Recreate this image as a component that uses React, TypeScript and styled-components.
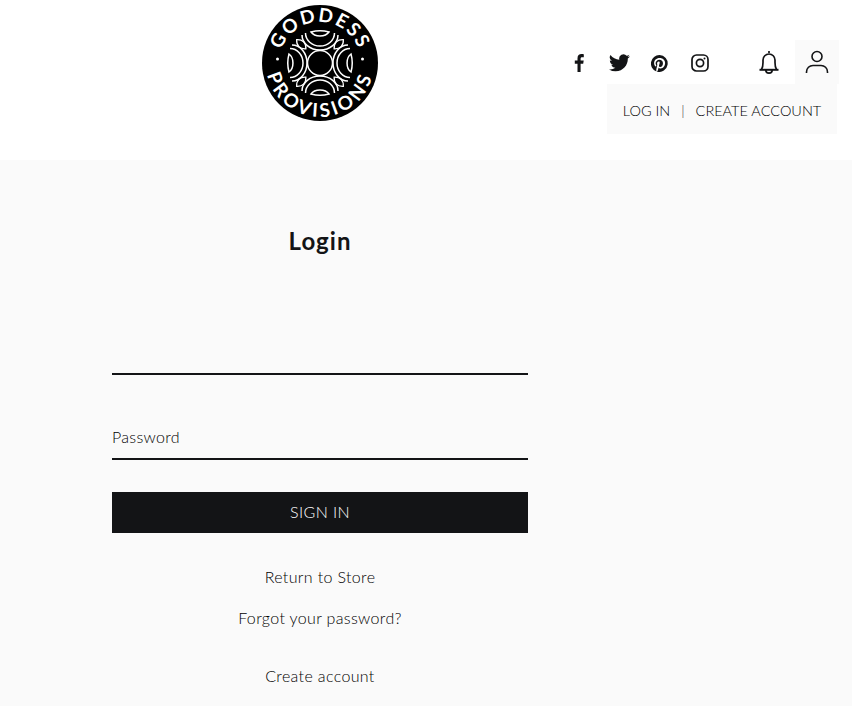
import React from 'react';
import styled, {createGlobalStyle} from 'styled-components';

const FONT = `"Lato", "Open Sans", "Liberation Sans", sans-serif`;
const INK = '#131416';

function Crescents() {
    return (
        <g fill="none" stroke="#fff">
            <path d="M-18 -28 A18 15 0 0 0 18 -28" strokeWidth="1.500"/>
            <path d="M-14.500 -30 A14.500 13 0 0 0 14.500 -30" strokeWidth="1.500"/>
            <path d="M-9 -31 Q0 -33.500 9 -31 A10 7 0 0 1 -9 -31 Z" strokeWidth="1.500"/>
        </g>
    );
}

function Leaf() {
    return <path d="M0 -20 C4.500 -24 4.500 -29 0 -33 C-4.500 -29 -4.500 -24 0 -20 Z" fill="none" stroke="#fff" strokeWidth="1.300"/>;
}

function Logo() {
    return (
        <svg width="116" height="116" viewBox="-58 -58 116 116">
            <defs>
                <path id="arc-top" d="M-41 0 A41 41 0 0 1 41 0"/>
                <path id="arc-bottom" d="M-54 0 A54 54 0 0 0 54 0"/>
            </defs>
            <circle r="58" fill="#000"/>
            <TopText>
                <textPath href="#arc-top" startOffset="50%" textAnchor="middle">GODDESS</textPath>
            </TopText>
            <BottomText>
                <textPath href="#arc-bottom" startOffset="50%" textAnchor="middle">PROVISIONS</textPath>
            </BottomText>
            <circle cx="-42.500" cy="-4" r="1.500" fill="#fff"/>
            <circle cx="42.500" cy="-4" r="1.500" fill="#fff"/>
            <circle r="12.500" fill="#000" stroke="#fff" strokeWidth="1.500"/>
            {[0, 90, 180, 270].map(angle => (
                <g key={angle} transform={`rotate(${angle})`}><Crescents/></g>
            ))}
            {[45, 135, 225, 315].map(angle => (
                <g key={angle} transform={`rotate(${angle})`}><Leaf/></g>
            ))}
        </svg>
    );
}

function FacebookIcon() {
    return (
        <svg width="10" height="18" viewBox="0 0 10 18" fill={INK}>
            <path d="M6.600 18V9.800h2.600l.5-3.200H6.600V4.700c0-.9.3-1.500 1.600-1.500h1.600V.3C9.500.2 8.600.1 7.500.1 5.100.1 3.500 1.500 3.500 4.200v2.400H.8v3.200h2.700V18z"/>
        </svg>
    );
}

function TwitterIcon() {
    return (
        <svg width="21" height="18" viewBox="0 0 24 20" fill={INK}>
            <path d="M24 2.400a9.800 9.800 0 0 1-2.800.8A4.900 4.900 0 0 0 23.300.5a9.800 9.800 0 0 1-3.100 1.200 4.900 4.900 0 0 0-8.400 4.500A14 14 0 0 1 1.700.9a4.900 4.900 0 0 0 1.500 6.600 4.900 4.900 0 0 1-2.200-.6v.1a4.900 4.900 0 0 0 3.900 4.800 4.900 4.900 0 0 1-2.200.1 4.900 4.900 0 0 0 4.600 3.400A9.900 9.900 0 0 1 0 17.300 14 14 0 0 0 7.500 19.500c9.100 0 14-7.500 14-14v-.6A10 10 0 0 0 24 2.400z"/>
        </svg>
    );
}

function PinterestIcon() {
    return (
        <svg width="17" height="17" viewBox="0 0 24 24" fill={INK}>
            <path d="M12 0a12 12 0 0 0-4.400 23.200c-.1-.9-.2-2.400 0-3.400l1.400-6s-.4-.7-.4-1.800c0-1.700 1-2.900 2.200-2.900 1 0 1.500.8 1.500 1.700 0 1-.7 2.600-1 4-.3 1.200.6 2.200 1.800 2.200 2.100 0 3.800-2.200 3.800-5.500 0-2.900-2.100-4.900-5-4.900-3.400 0-5.400 2.600-5.400 5.200 0 1 .4 2.100.9 2.700.1.100.1.200.1.300l-.3 1.400c-.1.200-.2.300-.4.200-1.500-.7-2.400-2.900-2.400-4.700 0-3.800 2.800-7.300 8-7.300 4.200 0 7.500 3 7.500 7 0 4.200-2.600 7.500-6.300 7.500-1.200 0-2.400-.6-2.800-1.400l-.8 2.900c-.3 1.100-1 2.400-1.500 3.200A12 12 0 1 0 12 0z"/>
        </svg>
    );
}

function InstagramIcon() {
    return (
        <svg width="18" height="18" viewBox="0 0 18 18" fill="none" stroke={INK}>
            <rect x="1" y="1" width="16" height="16" rx="4.500" strokeWidth="1.700"/>
            <circle cx="9" cy="9" r="3.600" strokeWidth="1.700"/>
            <circle cx="13.500" cy="4.500" r="1" fill={INK} stroke="none"/>
        </svg>
    );
}

function BellIcon() {
    return (
        <svg width="22" height="25" viewBox="0 0 22 25" fill="none" stroke={INK} strokeWidth="1.700" strokeLinejoin="round">
            <path d="M11 1v2"/>
            <path d="M3.500 19.500c1-1.500 1.500-3.500 1.500-7V10a6 6 0 0 1 12 0v2.500c0 3.500.5 5.500 1.500 7"/>
            <path d="M1.500 19.800h19" strokeWidth="2"/>
            <path d="M7.800 20a3.200 3.200 0 0 0 6.400 0"/>
        </svg>
    );
}

function UserIcon() {
    return (
        <svg width="24" height="24" viewBox="0 0 24 24" fill="none" stroke={INK} strokeWidth="1.600">
            <circle cx="12" cy="6.500" r="5"/>
            <path d="M1.500 23v-1c0-4 3-6.500 6.500-6.500h8c3.500 0 6.500 2.500 6.500 6.500v1"/>
        </svg>
    );
}

export default function App() {
    return (
        <>
            <GlobalStyle/>
            <Header>
                <LogoColumn>
                    <Logo/>
                </LogoColumn>
                <HeaderRight>
                    <IconRow>
                        <SocialList>
                            <SocialLink href="#" width={41}><FacebookIcon/></SocialLink>
                            <SocialLink href="#" width={40}><TwitterIcon/></SocialLink>
                            <SocialLink href="#" width={41}><PinterestIcon/></SocialLink>
                            <SocialLink href="#" width={40}><InstagramIcon/></SocialLink>
                        </SocialList>
                        <BellButton><BellIcon/></BellButton>
                        <UserButton><UserIcon/></UserButton>
                    </IconRow>
                    <AccountMenu>
                        <AccountLink href="#">LOG IN</AccountLink>
                        <AccountSeparator>|</AccountSeparator>
                        <AccountLink href="#">CREATE ACCOUNT</AccountLink>
                    </AccountMenu>
                </HeaderRight>
            </Header>
            <Main>
                <FormColumn>
                    <Title>Login</Title>
                    <EmailField aria-label="Email"/>
                    <PasswordField>
                        <FieldLabel htmlFor="password">Password</FieldLabel>
                        <FieldInput id="password" type="password"/>
                    </PasswordField>
                    <SignInButton>SIGN IN</SignInButton>
                    <FormLink href="#">Return to Store</FormLink>
                    <ForgotLink href="#">Forgot your password?</ForgotLink>
                    <CreateLink href="#">Create account</CreateLink>
                </FormColumn>
            </Main>
        </>
    );
}

const GlobalStyle = createGlobalStyle`
  html, body {
    margin: 0;
    padding: 0;
    background: #fafafa;
    height: 100%;
    overflow: hidden;
  }

  * {
    box-sizing: border-box;
  }

  body {
    font-family: ${FONT};
    font-weight: 300;
    color: #000;
  }
`;

const TopText = styled.text`
  font-family: ${FONT};
  font-size: 19px;
  font-weight: 700;
  letter-spacing: 1.800px;
  fill: #fff;
`;

const BottomText = styled(TopText)`
  letter-spacing: 3.200px;
`;

const Header = styled.header`
  height: 160px;
  background: #ffffff;
  display: flex;
  justify-content: space-between;
`;

const LogoColumn = styled.div`
  width: 640px;
  padding-top: 5px;
  display: flex;
  justify-content: center;
  align-items: flex-start;
`;

const HeaderRight = styled.div`
  width: 212px;
  position: relative;
`;

const IconRow = styled.div`
  position: absolute;
  top: 40px;
  right: 13px;
  display: flex;
  align-items: center;
  height: 44px;
`;

const SocialList = styled.div`
  display: flex;
  align-items: center;
  margin-right: 38px;
  padding-top: 2px;
`;

const SocialLink = styled.a<{ width: number }>`
  display: flex;
  justify-content: center;
  width: ${({width}) => width}px;
`;

const BellButton = styled.div`
  display: flex;
  margin-right: 15px;
`;

const UserButton = styled.div`
  width: 44px;
  height: 44px;
  background: #fafafa;
  display: flex;
  align-items: center;
  justify-content: center;
`;

const AccountMenu = styled.nav`
  position: absolute;
  top: 84px;
  right: 15px;
  width: 230px;
  height: 50px;
  padding-top: 2px;
  background: #fafafa;
  display: flex;
  align-items: center;
  justify-content: center;
  font-size: 14.500px;
`;

const AccountLink = styled.a`
  color: #000;
  text-decoration: none;
`;

const AccountSeparator = styled.span`
  margin: 0 11px;
  color: #333;
  font-size: 14px;
`;

const Main = styled.main`
  background: #fafafa;
`;

const FormColumn = styled.div`
  width: 640px;
  padding: 66px 112px 0;
  display: flex;
  flex-direction: column;
  align-items: center;
`;

const Title = styled.h1`
  margin: 0;
  font-size: 24px;
  line-height: 30px;
  font-weight: 700;
  letter-spacing: 1px;
  color: ${INK};
`;

const EmailField = styled.input`
  width: 100%;
  height: 40px;
  margin-top: 79px;
  border: 0;
  border-bottom: 2px solid ${INK};
  background: transparent;
  border-radius: 0;
  outline: none;
`;

const PasswordField = styled.div`
  position: relative;
  width: 100%;
  margin-top: 45px;
`;

const FieldLabel = styled.label`
  position: absolute;
  left: 0;
  top: 7px;
  font-size: 16px;
  line-height: 20px;
  letter-spacing: 0.300px;
`;

const FieldInput = styled.input`
  display: block;
  width: 100%;
  height: 40px;
  border: 0;
  border-bottom: 2px solid ${INK};
  background: transparent;
  border-radius: 0;
  outline: none;
`;

const SignInButton = styled.button`
  width: 100%;
  height: 41px;
  margin-top: 32px;
  padding-bottom: 3px;
  border: 0;
  background: ${INK};
  color: #fff;
  font-family: ${FONT};
  font-weight: 300;
  font-size: 16px;
  letter-spacing: 0.400px;
`;

const FormLink = styled.a`
  margin-top: 34px;
  font-size: 16px;
  line-height: 20px;
  letter-spacing: 0.350px;
  color: #000;
  text-decoration: none;
`;

const ForgotLink = styled(FormLink)`
  margin-top: 21px;
`;

const CreateLink = styled(FormLink)`
  margin-top: 38px;
`;
